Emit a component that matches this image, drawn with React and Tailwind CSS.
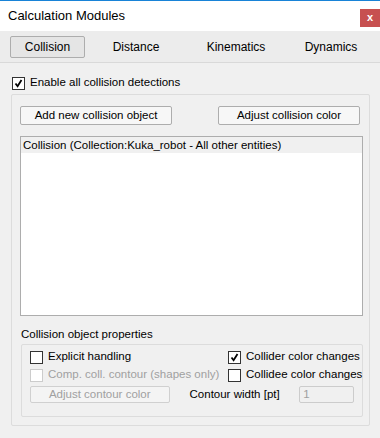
import { useState } from "react";

const font = { fontFamily: '"Liberation Sans", "Noto Sans", Arial, sans-serif' };

function Check({ checked, disabled, label, onChange }) {
  return (
    <label className={`flex h-[14px] items-center gap-[5px] whitespace-nowrap ${disabled ? "text-[#a0a0a0]" : "text-black"}`}>
      <span
        onClick={() => !disabled && onChange && onChange(!checked)}
        className={`flex h-[13px] w-[13px] shrink-0 items-center justify-center border bg-white ${disabled ? "border-[#cccccc]" : "border-[#333333]"}`}
      >
        {checked && (
          <svg width="9" height="9" viewBox="0 0 9 9">
            <path d="M1.5 4.5 L3.6 7.2 L7.5 1" fill="none" stroke="#000" strokeWidth="1.8" />
          </svg>
        )}
      </span>
      <span>{label}</span>
    </label>
  );
}

function Btn({ children, disabled, className = "" }) {
  return (
    <button
      className={`rounded-[2px] border whitespace-nowrap leading-none ${
        disabled ? "border-[#d0d0d0] bg-[#f4f4f4] text-[#a0a0a0]" : "border-[#adadad] bg-[#f7f7f7] text-black"
      } ${className}`}
    >
      {children}
    </button>
  );
}

export default function App() {
  const [enableAll, setEnableAll] = useState(true);
  const [explicit, setExplicit] = useState(false);
  const [collider, setCollider] = useState(true);
  const [collidee, setCollidee] = useState(false);
  const tabs = [
    { name: "Collision", w: "w-[75px] rounded-[2px] border border-[#adadad] bg-[#e5e5e5]" },
    { name: "Distance", w: "w-[102px]" },
    { name: "Kinematics", w: "w-[98px]" },
    { name: "Dynamics", w: "w-[92px]" },
  ];

  return (
    <div className="h-[438px] w-[380px] overflow-hidden bg-[#f0f0f0] text-[11.5px]" style={font}>
      <div className="h-px bg-[#1883d7]" />
      <div className="flex h-[30px] items-center justify-between bg-white pl-[8px]">
        <span className="text-[13px] text-black">Calculation Modules</span>
        <span className="mb-[-3px] flex h-[18px] w-[20px] items-center justify-center bg-[#c75050] text-[11px] font-bold text-white">
          x
        </span>
      </div>
      <div className="flex h-[32px] items-center border-b border-[#d9d9d9] bg-[#ececec] pl-[10px] text-[12px]">
        {tabs.map((t) => (
          <div key={t.name} className={`flex h-[22px] shrink-0 items-center justify-center text-black ${t.w}`}>
            {t.name}
          </div>
        ))}
      </div>

      <div className="px-[11px] pt-[13px]">
        <div className="pl-[1px]">
          <Check checked={enableAll} label="Enable all collision detections" onChange={setEnableAll} />
        </div>

        <div className="mt-[4px] h-[332px] w-[359px] rounded-[2px] border border-[#dcdcdc] px-[8px] pt-[11px]">
          <div className="flex justify-between pr-[1px]">
            <Btn className="h-[19px] w-[152px]">Add new collision object</Btn>
            <Btn className="h-[19px] w-[142px]">Adjust collision color</Btn>
          </div>
          <div className="mt-[11px] h-[180px] w-[343px] border border-[#adadad] bg-white">
            <div className="whitespace-nowrap bg-[#f0f0f0] px-[2px] py-px leading-[14px]">
              Collision (Collection:Kuka_robot - All other entities)
            </div>
          </div>

          <div className="mt-[11px] h-[14px] pl-[1px] leading-[14px]">Collision object properties</div>
          <div className="mt-[3px] ml-[1px] h-[73px] w-[342px] rounded-[2px] border border-[#dcdcdc] px-[8px] pt-[5px]">
            <div className="flex justify-between">
              <Check checked={explicit} label="Explicit handling" onChange={setExplicit} />
              <div className="w-[126px]">
                <Check checked={collider} label="Collider color changes" onChange={setCollider} />
              </div>
            </div>
            <div className="mt-[4px] flex justify-between">
              <Check checked={false} disabled label="Comp. coll. contour (shapes only)" />
              <div className="w-[126px]">
                <Check checked={collidee} label="Collidee color changes" onChange={setCollidee} />
              </div>
            </div>
            <div className="mt-[4px] flex items-center">
              <Btn disabled className="h-[17px] w-[140px]">Adjust contour color</Btn>
              <span className="ml-[20px] w-[110px] whitespace-nowrap">Contour width [pt]</span>
              <div className="flex h-[17px] w-[55px] items-center rounded-[2px] border border-[#cccccc] bg-[#f0f0f0] pl-[3px] text-[#a0a0a0]">
                1
              </div>
            </div>
          </div>
        </div>
      </div>
    </div>
  );
}
